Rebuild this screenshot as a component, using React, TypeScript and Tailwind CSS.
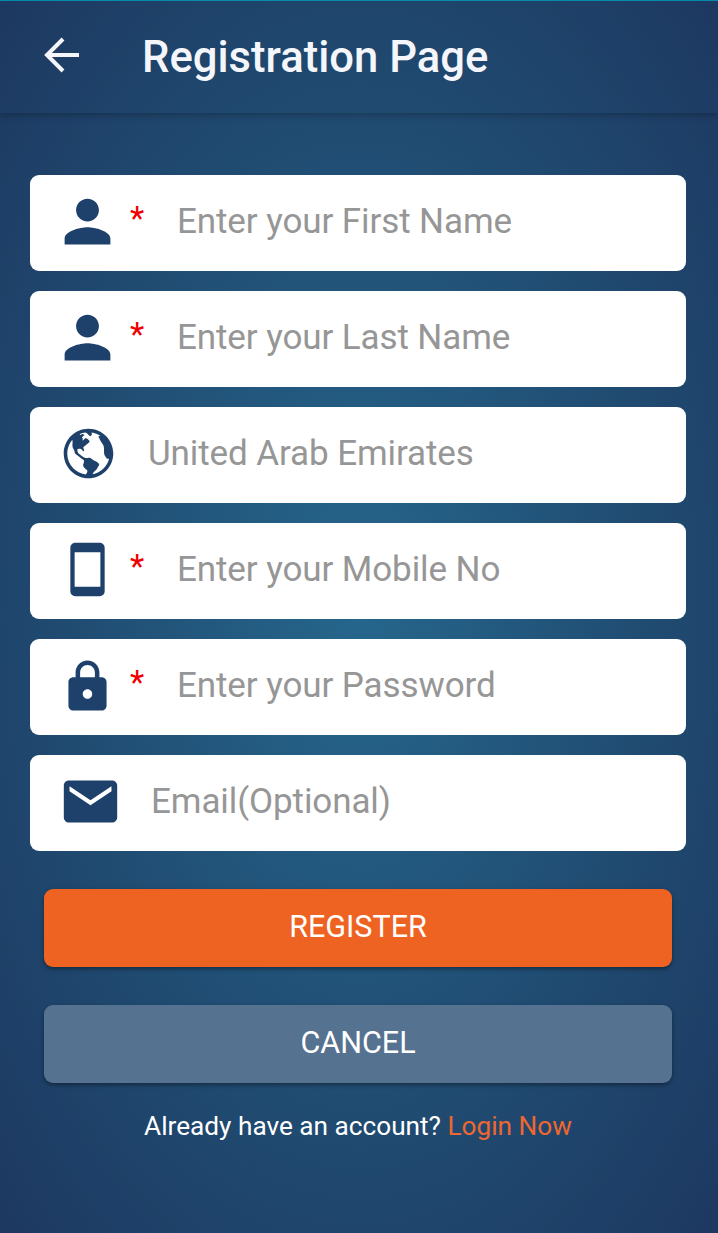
import type { IconType } from 'react-icons';
import { IoMdGlobe, IoMdLock, IoMdMail, IoMdPerson, IoMdPhonePortrait } from 'react-icons/io';

interface Field {
    name: string;
    placeholder: string;
    icon: IconType;
    type?: string;
    required?: boolean;
    iconClass: string;
    inputClass: string;
}

const fields: Field[] = [
    { name: 'firstName', placeholder: 'Enter your First Name', icon: IoMdPerson, required: true, iconClass: 'ml-[27px]', inputClass: 'ml-8' },
    { name: 'lastName', placeholder: 'Enter your Last Name', icon: IoMdPerson, required: true, iconClass: 'ml-[27px]', inputClass: 'ml-8' },
    { name: 'country', placeholder: 'United Arab Emirates', icon: IoMdGlobe, iconClass: 'ml-7', inputClass: 'ml-[29px]' },
    { name: 'mobile', placeholder: 'Enter your Mobile No', icon: IoMdPhonePortrait, required: true, iconClass: 'ml-[27px]', inputClass: 'ml-8' },
    { name: 'password', placeholder: 'Enter your Password', icon: IoMdLock, type: 'password', required: true, iconClass: 'ml-[27px]', inputClass: 'ml-8' },
    { name: 'email', placeholder: 'Email(Optional)', icon: IoMdMail, iconClass: 'ml-[30px]', inputClass: 'ml-[30px]' },
];

function FormField({ field }: { field: Field }) {
    const Icon = field.icon;

    return (
        <label className="flex h-24 items-center rounded-[9px] bg-white pb-[3px] pr-4">
            <Icon className={`size-[61px] shrink-0 text-[#1e416b] ${field.iconClass}`} />
            {field.required && (
                <span className="mb-[7px] ml-[11px] w-4 shrink-0 text-center text-[33px] leading-none text-[#f00000]">*</span>
            )}
            <input
                name={field.name}
                type={field.type ?? 'text'}
                placeholder={field.placeholder}
                className={`min-w-0 flex-1 bg-transparent pt-px text-[35px] tracking-[-0.1px] outline-none placeholder:text-[#969696] ${field.inputClass}`}
            />
        </label>
    );
}

export default function App() {
    return (
        <div className="flex h-[1233px] w-full flex-col border-t border-[#078fae] bg-[radial-gradient(ellipse_farthest-corner_at_center,#26668c_0%,#204a70_60%,#1d3861_100%)] font-[Roboto,sans-serif] text-white">
            <header className="flex h-28 shrink-0 items-center pb-1 pl-11 shadow-[0_3px_6px_rgba(0,0,0,0.22)]">
                <button aria-label="Back">
                    <svg viewBox="0 0 36 36" className="size-9" fill="none" stroke="#f4f6fb" strokeWidth="4">
                        <path d="M19 2 3 18l16 16M3 18h32" />
                    </svg>
                </button>
                <h1 className="ml-[62px] pt-[5px] text-[43.6px] font-medium text-[#f4f6fb]">Registration Page</h1>
            </header>

            <form className="flex flex-col pl-[30px] pr-8 pt-[62px]">
                <div className="flex flex-col gap-5">
                    {fields.map(field => (
                        <FormField key={field.name} field={field} />
                    ))}
                </div>

                <div className="mx-[14px] mt-[38px] flex flex-col gap-[38px]">
                    <button
                        type="button"
                        className="h-[78px] rounded-[9px] bg-[#ee6321] pb-[2px] text-[30.5px] shadow-[0_2px_4px_rgba(0,0,0,0.4)]"
                    >
                        REGISTER
                    </button>
                    <button
                        type="button"
                        className="h-[78px] rounded-[9px] bg-[#557290] pb-[2px] text-[30.5px] shadow-[0_2px_4px_rgba(0,0,0,0.4)]"
                    >
                        CANCEL
                    </button>
                </div>
            </form>

            <p className="mt-6 pr-[2px] text-center text-[26.2px]">
                Already have an account? <a className="text-[#ee6730]">Login Now</a>
            </p>
        </div>
    );
}
